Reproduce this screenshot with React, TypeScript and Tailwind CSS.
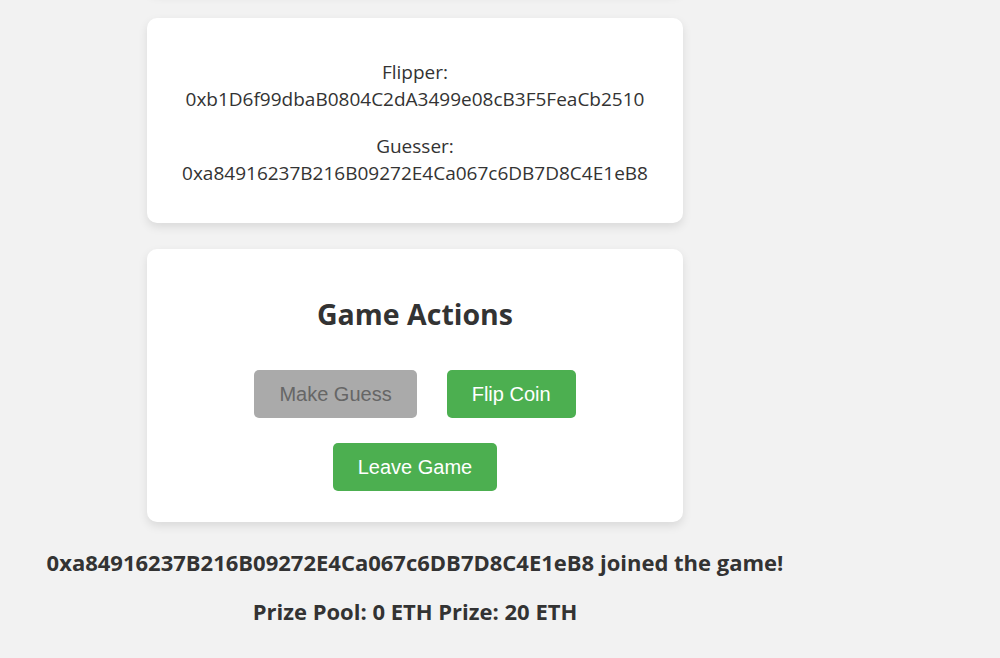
// Coin flip game view — player card, action buttons and status lines.

const FLIPPER = "0xb1D6f99dbaB0804C2dA3499e08cB3F5FeaCb2510";
const GUESSER = "0xa84916237B216B09272E4Ca067c6DB7D8C4E1eB8";

const card =
  "w-[536px] bg-white rounded-[10px] shadow-[0_4px_10px_rgba(0,0,0,0.1)] text-center";

const btn =
  "h-[48px] px-[25px] rounded-[5px] text-[20px] font-['Liberation_Sans',Arial,sans-serif]";

export default function App() {
  return (
    <div className="min-h-[658px] bg-[#f2f2f2] overflow-hidden text-[#333] font-['Open_Sans','Noto_Sans',sans-serif]">
      <div className="w-[830px] flex flex-col items-center">
        {/* tail of the card scrolled out above */}
        <div className={`${card} h-[40px] mt-[-48px] mb-[26px]`} />

        <div className={`${card} pt-[41px] pb-[36px] flex flex-col gap-[20px] text-[19px] leading-[27px]`}>
          <p>
            Flipper:
            <br />
            {FLIPPER}
          </p>
          <p>
            Guesser:
            <br />
            {GUESSER}
          </p>
        </div>

        <div className={`${card} mt-[26px] pt-[46px] pb-[31px] flex flex-col items-center`}>
          <h2 className="text-[28.5px] leading-[38px] font-bold">Game Actions</h2>
          <div className="mt-[37px] flex gap-[30px]">
            <button type="button" disabled className={`${btn} bg-[#aaaaaa] text-[#666666]`}>
              Make Guess
            </button>
            <button type="button" className={`${btn} bg-[#4caf50] text-white`}>
              Flip Coin
            </button>
          </div>
          <button type="button" className={`${btn} mt-[25px] bg-[#4caf50] text-white`}>
            Leave Game
          </button>
        </div>

        <p className="mt-[25px] text-[22px] leading-[30px] font-bold">{GUESSER} joined the game!</p>
        <p className="mt-[19px] text-[22px] leading-[30px] font-bold">Prize Pool: 0 ETH Prize: 20 ETH</p>
      </div>
    </div>
  );
}
